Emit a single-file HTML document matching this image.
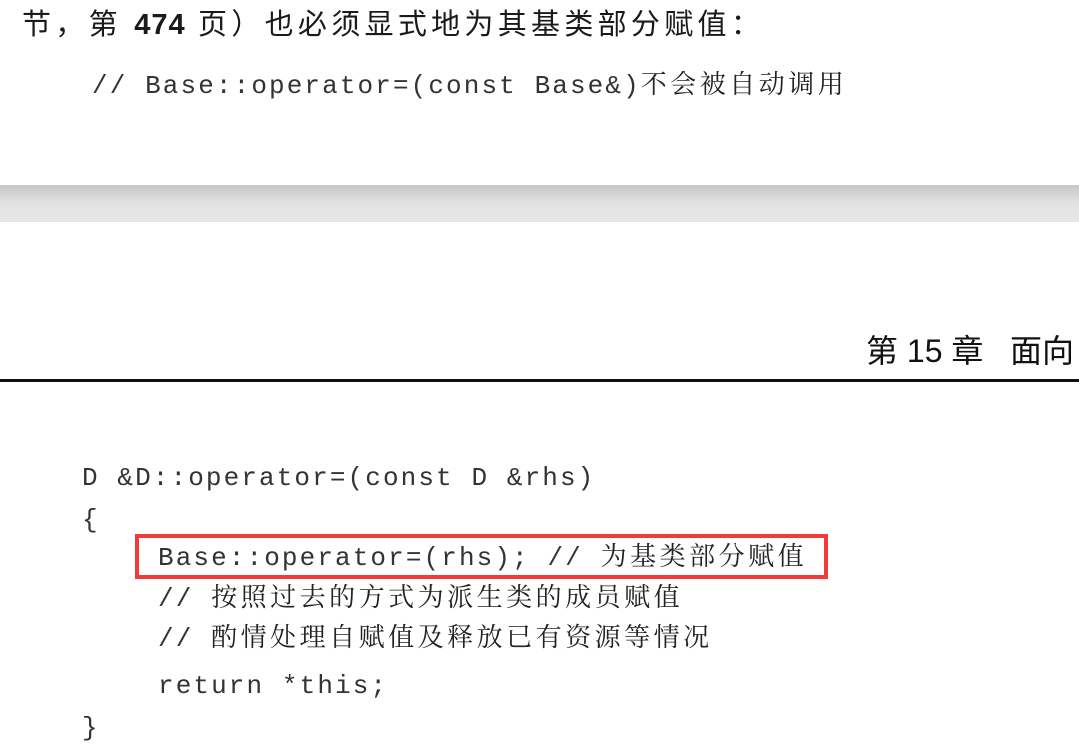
<!DOCTYPE html><html><head><meta charset="utf-8"><style>
body{margin:0;width:1079px;height:747px;background:#fff;position:relative;overflow:hidden;font-family:"Liberation Serif","Noto Serif CJK SC",serif;color:#222}
.a{position:absolute;white-space:nowrap;line-height:1}
.m{font-family:"Liberation Mono",monospace;font-size:26px;letter-spacing:2.1px;color:#333}
.c{font-family:"Liberation Serif","Noto Serif CJK SC",serif;font-size:26px;letter-spacing:3.5px;color:#222}
</style></head><body>
<div class="a" style="left:22px;top:11px;font-family:'Liberation Sans','Noto Sans CJK SC',sans-serif;font-size:29px;letter-spacing:4.3px;color:#1a1a1a">节，第 <span style="font-weight:bold;letter-spacing:1px">474</span> 页）也必须显式地为其基类部分赋值：</div>
<div class="a m" style="left:92px;top:72px">// Base::operator=(const Base&amp;)<span class="c">不会被自动调用</span></div>
<div style="position:absolute;left:0;top:185px;width:1079px;height:37px;background:linear-gradient(#c6c6c6,#e2e2e2 50%,#e6e6e6)"></div>
<div class="a" style="left:866px;top:335px;font-family:'Liberation Sans','Noto Sans CJK SC',sans-serif;font-size:32px;color:#111">第 15 章&nbsp;&nbsp;&nbsp;面向</div>
<div style="position:absolute;left:0;top:379px;width:1079px;height:3px;background:#111"></div>
<div class="a m" style="left:82px;top:465px">D &amp;D::operator=(const D &amp;rhs)</div>
<div class="a m" style="left:82px;top:507px">{</div>
<div style="position:absolute;left:135px;top:534px;width:685px;height:37px;border:4px solid #f23a3a"></div>
<div class="a m" style="left:158px;top:544px">Base::operator=(rhs); // <span class="c">为基类部分赋值</span></div>
<div class="a m" style="left:158px;top:585px">// <span class="c">按照过去的方式为派生类的成员赋值</span></div>
<div class="a m" style="left:158px;top:625px">// <span class="c">酌情处理自赋值及释放已有资源等情况</span></div>
<div class="a m" style="left:158px;top:673px">return *this;</div>
<div class="a m" style="left:82px;top:715px">}</div>
</body></html>
